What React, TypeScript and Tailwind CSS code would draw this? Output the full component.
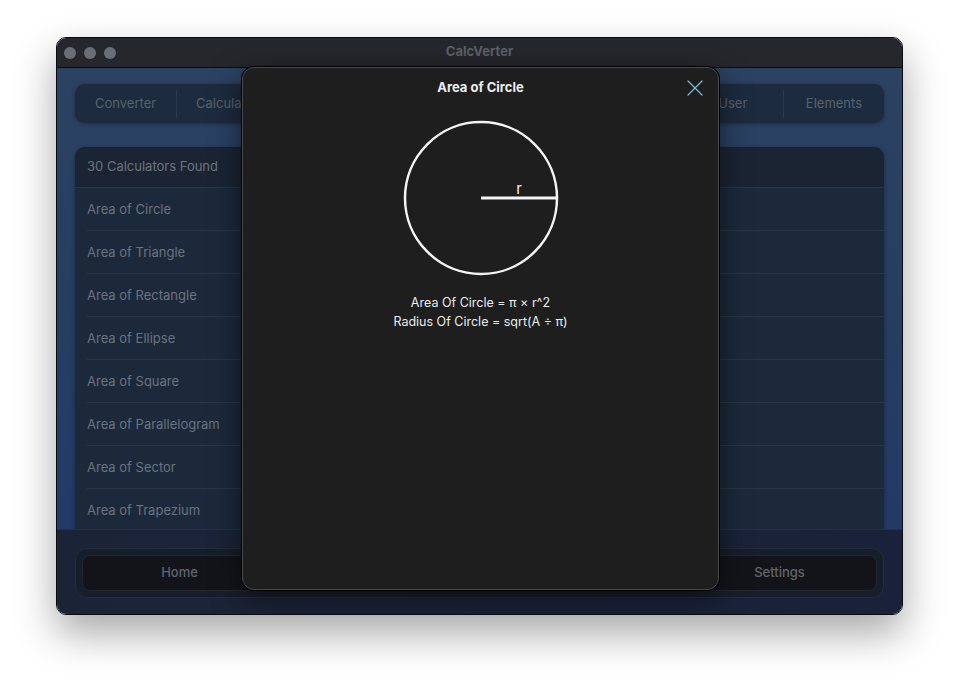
import { X } from 'lucide-react'

const tabs = ['Converter', 'Calculator', 'Math', 'Finance', 'Health', 'Date', 'User', 'Elements']

const calculators = [
  'Area of Circle',
  'Area of Triangle',
  'Area of Rectangle',
  'Area of Ellipse',
  'Area of Square',
  'Area of Parallelogram',
  'Area of Sector',
  'Area of Trapezium',
]

const navButtons = ['Home', 'Favourites', 'History', 'Settings']

function TitleBar() {
  return (
    <div className="relative flex h-[30px] shrink-0 items-center border-b border-[#0b0c0f] bg-[#25272c] pl-[7px]">
      <div className="flex gap-[8px] pt-px">
        <span className="h-[12px] w-[12px] rounded-full bg-[#6a6f77]" />
        <span className="h-[12px] w-[12px] rounded-full bg-[#6a6f77]" />
        <span className="h-[12px] w-[12px] rounded-full bg-[#6a6f77]" />
      </div>
      <div className="absolute inset-x-0 top-[4px] text-center text-[13px] leading-[18px] font-bold text-[#5b5f66]">
        CalcVerter
      </div>
    </div>
  )
}

function Tabs() {
  return (
    <div className="mx-[18px] mt-[16px] flex h-[39px] items-center rounded-[10px] bg-[#1d2b3e] shadow-[0_1px_4px_rgba(0,0,0,0.35)]">
      {tabs.map((tab, i) => (
        <div key={tab} className="flex flex-1 items-center">
          {i > 0 && <span className="h-[28px] w-px bg-[#2a3a4e]" />}
          <span className="flex-1 text-center text-[13px] text-[#58616d]">{tab}</span>
        </div>
      ))}
    </div>
  )
}

function CalculatorList() {
  return (
    <div className="mx-[18px] mt-[24px] flex-1 overflow-hidden rounded-t-[10px] bg-[#1b293b] shadow-[0_1px_4px_rgba(0,0,0,0.35)]">
      <div className="flex h-[41px] items-center border-b border-[#2a3340] bg-[#1a2433] px-[12px] text-[13px] text-[#6c7480]">
        30 Calculators Found
      </div>
      {calculators.map((name) => (
        <div key={name} className="pl-[12px]">
          <div className="flex h-[43px] items-center border-b border-[#2b3544] pt-[2px] text-[13px] text-[#6a737f]">
            {name}
          </div>
        </div>
      ))}
    </div>
  )
}

function BottomBar() {
  return (
    <div className="flex h-[85px] shrink-0 items-center border-t border-[#26303f] bg-[linear-gradient(90deg,#1b2437,#19223a)] px-[18px] pt-[2px]">
      <div className="flex h-[50px] w-full gap-[5px] rounded-[12px] border border-[#262d3a] bg-[#171e2b] p-[6px]">
        {navButtons.map((b) => (
          <div
            key={b}
            className="flex flex-1 items-center justify-center rounded-[8px] border border-[#23272f] bg-[#121419] text-[13px] font-medium text-[#60646b]"
          >
            {b}
          </div>
        ))}
      </div>
    </div>
  )
}

function CircleModal() {
  return (
    <div className="absolute left-[185px] top-[29px] flex h-[523px] w-[477px] flex-col items-center rounded-[12px] border border-[#4a4a4a] bg-[#1e1e1e] shadow-[0_0_0_1px_#000,0_8px_30px_rgba(0,0,0,0.55)]">
      <div className="relative flex h-[40px] w-full shrink-0 items-center justify-center">
        <span className="text-[13px] font-bold text-[#ececec]">Area of Circle</span>
        <X className="absolute right-[9px] top-[6px] h-[28px] w-[28px] text-[#79b6d2]" strokeWidth={1.1} />
      </div>
      <svg width="180" height="180" viewBox="0 0 180 180" className="shrink-0">
        <circle cx="90" cy="90" r="76" fill="none" stroke="#f4f4f4" strokeWidth="2.5" />
        <line x1="90" y1="90" x2="166" y2="90" stroke="#f4f4f4" strokeWidth="3" />
        <text x="128" y="86" textAnchor="middle" fill="#f4f4f4" fontSize="15" fontFamily="Inter, sans-serif">
          r
        </text>
      </svg>
      <div className="mt-[5px] text-center text-[12.5px] leading-[19px] text-[#ececec]">
        <div>Area Of Circle = π × r^2</div>
        <div>Radius Of Circle = sqrt(A ÷ π)</div>
      </div>
    </div>
  )
}

export default function App() {
  return (
    <div className="h-[690px] w-[959px] overflow-hidden bg-white pl-[56px] pt-[37px] font-['Inter',sans-serif]">
      <div className="relative flex h-[578px] w-[847px] flex-col overflow-hidden rounded-[10px] border border-[#0a0b0d] shadow-[0_18px_40px_rgba(0,0,0,0.35)]">
        <TitleBar />
        <div className="flex min-h-0 flex-1 flex-col bg-[linear-gradient(180deg,#2b4262,#263d62_60%,#233a68)]">
          <Tabs />
          <CalculatorList />
        </div>
        <BottomBar />
        <CircleModal />
      </div>
    </div>
  )
}
